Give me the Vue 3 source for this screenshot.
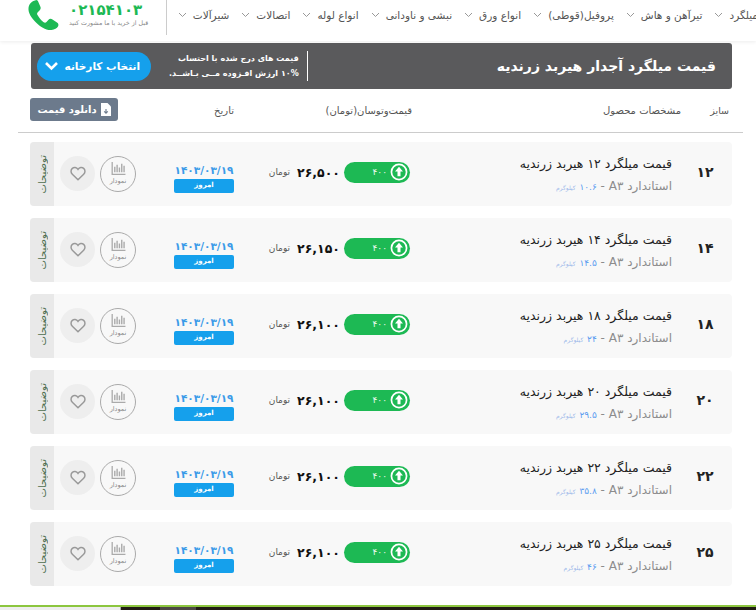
<script setup>
const nav = ['میلگرد', 'تیرآهن و هاش', 'پروفیل(قوطی)', 'انواع ورق', 'نبشی و ناودانی', 'انواع لوله', 'اتصالات', 'شیرآلات']
const rows = [
  { s: '۱۲', w: '۱۰.۶', p: '۲۶,۵۰۰' },
  { s: '۱۴', w: '۱۴.۵', p: '۲۶,۱۵۰' },
  { s: '۱۸', w: '۲۴', p: '۲۶,۱۰۰' },
  { s: '۲۰', w: '۲۹.۵', p: '۲۶,۱۰۰' },
  { s: '۲۲', w: '۳۵.۸', p: '۲۶,۱۰۰' },
  { s: '۲۵', w: '۴۶', p: '۲۶,۱۰۰' },
]
</script>

<template>
  <div class="page" dir="rtl">
    <header class="top">
      <nav class="nav">
        <span v-for="n in nav" :key="n" class="nav-item">
          {{ n }}
          <svg width="9" height="6" viewBox="0 0 9 6"><path d="M1 1l3.5 3.5L8 1" fill="none" stroke="#999" stroke-width="1"/></svg>
        </span>
      </nav>
      <div class="contact">
        <div class="tel">
          <div class="tel-num">۰۲۱۵۴۱۰۳</div>
          <div class="tel-sub">قبل از خرید با ما مشورت کنید</div>
        </div>
        <svg class="phone" width="31" height="31" viewBox="0 0 31 31"><path fill="#1db954" d="M8.500 0 C4 1 1 3.500 0.500 8 C0 13 3.500 18 8 22.500 C12.500 27 18 30.500 23.500 30 C26.500 29.700 29 28 30 26.500 C30.800 25 30.500 23.500 29 22.500 L24.500 19.500 C23 18.500 21.500 18.700 20.300 20 L18.500 22 C17.500 23 16.500 22.800 15.300 22 C13 20 10.800 17.500 9.500 15 C8.800 13.800 9 13 10 12 L11.500 10.500 C12.800 9.300 13 8 12.300 6.500 L9.800 0.800 Z"/></svg>
      </div>
    </header>

    <section class="banner">
      <h1 class="banner-title">قیمت میلگرد آجدار هیربد زرندیه</h1>
      <div class="banner-side">
        <div class="banner-note">
          <div>قیمت های درج شده با احتساب</div>
          <div>۱۰% ارزش افـزوده مــی بـاشــد.</div>
        </div>
        <button class="factory">
          انتخاب کارخانه
          <svg width="15" height="10" viewBox="0 0 15 10"><path d="M2 2l5.500 5.500L13 2" fill="none" stroke="#fff" stroke-width="2.600"/></svg>
        </button>
      </div>
    </section>

    <div class="head">
      <span class="h-cell h-size">سایز</span>
      <span class="h-cell h-spec">مشخصات محصول</span>
      <span class="h-cell h-price">قیمت‌وتوسان(تومان)</span>
      <span class="h-cell h-date">تاریخ</span>
      <button class="dl">
        <svg width="10" height="13" viewBox="0 0 10 13"><path fill="#fff" d="M0 0h6.500L10 3.500V13H0z"/><path d="M5 6v4M3.200 8.400 5 10.200l1.800-1.800" fill="none" stroke="#6c7a8c" stroke-width="1.100"/></svg>
        دانلود قیمت
      </button>
    </div>

    <div class="list">
      <article v-for="r in rows" :key="r.s" class="row">
        <div class="size">{{ r.s }}</div>
        <div class="spec">
          <div class="spec-title">قیمت میلگرد {{ r.s }} هیربد زرندیه</div>
          <div class="spec-sub">استاندارد <bdi>A۳</bdi> <bdi>-</bdi> <b><bdi>{{ r.w }}</bdi></b> <small>کیلوگرم</small></div>
        </div>
        <div class="price">
          <div class="chip">
            <svg width="18" height="18" viewBox="0 0 19 19"><circle cx="9.500" cy="9.500" r="8" fill="none" stroke="#fff" stroke-width="1.800"/><path fill="#fff" d="M9.500 4l4.200 5h-2.600v5H7.900V9H5.300z"/></svg>
            <span>۴۰۰</span>
          </div>
          <div class="amount">{{ r.p }}</div>
          <div class="unit">تومان</div>
        </div>
        <div class="date">
          <div class="date-val">۱۴۰۳/۰۳/۱۹</div>
          <div class="today">امروز</div>
        </div>
        <div class="chart">
          <svg width="15" height="13" viewBox="0 0 15 14"><path d="M.7 0v13.300H15" fill="none" stroke="#aaa" stroke-width="1.400"/><path d="M3.500 5v6M6 3v8M8.500 6v5M11 2v9M13.500 4v7" stroke="#aaa" stroke-width="1.500"/></svg>
          <span>نمودار</span>
        </div>
        <div class="fav">
          <svg width="16" height="15" viewBox="0 0 24 22"><path d="M12 20.500 3.500 12C.8 9.300 1 5.500 3.500 3.300 6 1.200 9.800 1.600 12 4.800 14.200 1.600 18 1.200 20.500 3.300 23 5.500 23.200 9.300 20.500 12z" fill="none" stroke="#999" stroke-width="2.200"/></svg>
        </div>
        <div class="desc"><span>توضیحات</span></div>
      </article>
    </div>

    <footer class="foot">
      <div class="foot-light"></div>
      <div class="foot-dark"><i></i></div>
    </footer>
  </div>
</template>

<style>
html, body { margin: 0; background: #fff; }
</style>

<style scoped>
.page {
  width: 756px;
  height: 610px;
  overflow: hidden;
  position: relative;
  background: #fff;
  font-family: "DejaVu Sans", sans-serif;
  color: #333;
}
.top {
  height: 41px;
  box-sizing: border-box;
  display: flex;
  align-items: flex-start;
  justify-content: space-between;
  box-shadow: 0 1px 4px rgba(0, 0, 0, 0.08);
  overflow: hidden;
}
.nav {
  display: flex;
  gap: 12px;
  margin-right: -2px;
  padding-top: 9px;
  white-space: nowrap;
}
.nav-item {
  font-size: 10.500px;
  color: #555;
  display: flex;
  align-items: center;
  gap: 6px;
}
.contact {
  display: flex;
  align-items: flex-start;
  justify-content: space-between;
  box-sizing: border-box;
  width: 139px;
  flex: none;
  margin-left: 28px;
  border-right: 1px solid #ccc;
  padding-right: 16px;
  height: 35px;
}
.tel { width: 81px; text-align: left; padding-top: 3px; }
.tel-num {
  color: #1db954;
  font-size: 15px;
  font-weight: 700;
  letter-spacing: 3.200px;
  line-height: 14px;
  white-space: nowrap;
}
.tel-sub { font-size: 6.300px; color: #888; margin-top: 2px; white-space: nowrap; }
.banner {
  margin: 2px 24px 0 31px;
  height: 46px;
  background: #5a5a5c;
  border-radius: 3px;
  display: flex;
  align-items: center;
  justify-content: space-between;
  padding: 0 16px 0 6px;
  color: #fff;
}
.banner-title { font-size: 14px; font-weight: 700; margin: 0; }
.banner-side { display: flex; align-items: center; gap: 18px; }
.banner-note {
  font-size: 8px;
  font-weight: 700;
  line-height: 15px;
  border-right: 1px solid #fff;
  padding-right: 8px;
  white-space: nowrap;
}
.factory {
  width: 114px;
  height: 29px;
  border: 0;
  border-radius: 15px;
  background: #15a0ec;
  color: #fff;
  font: 700 10.500px "DejaVu Sans", sans-serif;
  display: flex;
  align-items: center;
  justify-content: space-between;
  padding: 0 11px 0 7px;
  white-space: nowrap;
}
.head {
  height: 43px;
  box-sizing: border-box;
  padding: 9px 27px 11px 0;
  display: flex;
  align-items: center;
  font-size: 10px;
  color: #555;
}
.h-cell { margin-top: 2px; }
.h-size { width: 48px; font-size: 9.500px; }
.h-spec { width: 269px; }
.h-price { width: 178px; }
.h-date { width: 116px; }
.dl {
  width: 88px;
  height: 23px;
  flex: none;
  border: 0;
  border-radius: 3px;
  background: #6c7a8c;
  color: #fff;
  font: 700 10px "DejaVu Sans", sans-serif;
  display: flex;
  align-items: center;
  justify-content: center;
  gap: 4px;
  padding: 0;
}
.list {
  margin: 0 13px 0 18px;
  border-top: 1px solid #ccc;
  padding: 9px 11px 0 12px;
  display: flex;
  flex-direction: column;
  gap: 12px;
}
.row {
  height: 64px;
  background: #f8f8f8;
  border-radius: 4px;
  display: flex;
  align-items: center;
  overflow: hidden;
}
.size { width: 60px; flex: none; box-sizing: border-box; padding-left: 6px; text-align: center; font-size: 14px; font-weight: 700; color: #222; margin-top: -5px; }
.spec { width: 262px; flex: none; margin-top: 1px; }
.spec-title { font-size: 12.500px; color: #222; white-space: nowrap; }
.spec-sub { font-size: 12px; color: #8c8c8c; margin-top: 8px; white-space: nowrap; }
.spec-sub b { color: #5b9cf0; font-weight: 400; font-size: 9px; }
.spec-sub small { color: #9db8ea; font-size: 6px; }
.price { display: flex; align-items: center; width: 176px; flex: none; margin-top: -4px; }
.chip {
  width: 66px;
  height: 21px;
  flex: none;
  border-radius: 11px;
  background: #1db954;
  color: #eafaf0;
  display: flex;
  align-items: center;
  gap: 3px;
  padding-right: 2px;
  box-sizing: border-box;
  font-size: 9px;
}
.amount { font-size: 12.500px; font-weight: 700; color: #111; margin-right: 4px; white-space: nowrap; }
.unit { font-size: 9px; color: #555; margin-right: 7px; white-space: nowrap; }
.date { width: 60px; flex: none; text-align: center; margin-top: 9px; }
.date-val { color: #3b9be8; font-size: 10.500px; font-weight: 700; white-space: nowrap; line-height: 12px; }
.today {
  background: #15a0ec;
  color: #fff;
  height: 14px;
  line-height: 13px;
  font-size: 7px;
  font-weight: 700;
  border-radius: 2px;
  margin-top: 3px;
}
.chart {
  width: 36px;
  height: 36px;
  flex: none;
  box-sizing: border-box;
  margin-right: 38px;
  border: 1px solid #aaa;
  border-radius: 50%;
  display: flex;
  flex-direction: column;
  align-items: center;
  justify-content: center;
  gap: 2px;
  font-size: 6.500px;
  color: #888;
  margin-top: -1px;
}
.fav {
  width: 35px;
  height: 35px;
  flex: none;
  margin-right: 5px;
  border-radius: 50%;
  background: #eee;
  display: flex;
  align-items: center;
  justify-content: center;
  margin-top: -1px;
}
.desc {
  width: 24px;
  height: 64px;
  flex: none;
  margin-right: 6px;
  background: #e9e9e9;
  display: flex;
  align-items: center;
  justify-content: center;
}
.desc span {
  writing-mode: vertical-rl;
  transform: rotate(180deg);
  font-size: 10px;
  color: #4f6f4f;
  white-space: nowrap;
}
.foot {
  position: absolute;
  left: 0;
  right: 0;
  bottom: 0;
  height: 5px;
  display: flex;
  direction: ltr;
  border-top: 2px solid #8cc63f;
  box-sizing: border-box;
}
.foot-light { width: 121px; background: #eee; border-right: 1px solid #aaa; box-sizing: border-box; }
.foot-dark { flex: 1; background: #211c14; }
.foot-dark i { display: block; width: 36px; height: 100%; margin-left: 39px; background: #4d4844; }
</style>
